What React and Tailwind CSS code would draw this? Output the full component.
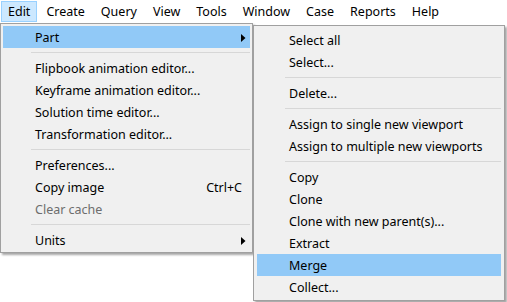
import React from 'react';

const font = { fontFamily: '"Noto Sans", "Liberation Sans", sans-serif' };

const bar = ['Edit', 'Create', 'Query', 'View', 'Tools', 'Window', 'Case', 'Reports', 'Help'];

const editItems = [
  { label: 'Part', sub: true, active: true },
  { sep: true },
  { label: 'Flipbook animation editor...' },
  { label: 'Keyframe animation editor...' },
  { label: 'Solution time editor...' },
  { label: 'Transformation editor...' },
  { sep: true },
  { label: 'Preferences...' },
  { label: 'Copy image', key: 'Ctrl+C' },
  { label: 'Clear cache', disabled: true },
  { sep: true },
  { label: 'Units', sub: true },
];

const partItems = [
  { label: 'Select all' },
  { label: 'Select...' },
  { sep: true },
  { label: 'Delete...' },
  { sep: true },
  { label: 'Assign to single new viewport' },
  { label: 'Assign to multiple new viewports' },
  { sep: true },
  { label: 'Copy' },
  { label: 'Clone' },
  { label: 'Clone with new parent(s)...' },
  { label: 'Extract' },
  { label: 'Merge', active: true },
  { label: 'Collect...' },
];

function Arrow() {
  return (
    <svg width="5" height="8" viewBox="0 0 5 8" className="shrink-0">
      <path d="M0 0 L4.5 4 L0 8 Z" fill="#000" />
    </svg>
  );
}

function MenuRow({ item }) {
  if (item.sep) {
    return (
      <div className="flex h-[9px] items-center pl-[28px]">
        <div className="h-px w-full bg-[#d7d7d7]" />
      </div>
    );
  }
  return (
    <div
      className={`flex h-[22px] items-center pl-[32px] pr-[4px] pt-[2px] ${
        item.active ? 'bg-[#91c9f7]' : ''
      } ${item.disabled ? 'text-[#6d6d6d]' : 'text-black'}`}
    >
      <span className="flex-1 whitespace-nowrap">{item.label}</span>
      {item.key && <span className="pr-[4px]">{item.key}</span>}
      {item.sub && <Arrow />}
    </div>
  );
}

function Menu({ items, cls }) {
  return (
    <div
      className={`absolute border border-[#a0a0a0] bg-[#f0f0f0] shadow-[2px_2px_2px_rgba(0,0,0,0.35)] ${cls}`}
    >
      {items.map((item, i) => (
        <MenuRow key={i} item={item} />
      ))}
    </div>
  );
}

export default function App() {
  return (
    <div
      className="relative h-[302px] w-[507px] overflow-hidden bg-white text-[12.5px] text-black"
      style={font}
    >
      <div className="flex h-[23px] items-start gap-[2px] pl-px pt-px">
        {bar.map((name) => (
          <div
            key={name}
            className={`flex h-[21px] items-center border px-[6px] pt-[2px] ${
              name === 'Edit' ? 'border-[#99d1ff] bg-[#cce8ff]' : 'border-transparent'
            }`}
          >
            {name}
          </div>
        ))}
      </div>
      <Menu items={editItems} cls="left-0 top-[23px] w-[253px] px-[2px] pt-[2px] pb-[1px]" />
      <Menu items={partItems} cls="left-[253px] top-[25px] w-[252px] px-[3px] pt-[3px] pb-[2px]" />
    </div>
  );
}
